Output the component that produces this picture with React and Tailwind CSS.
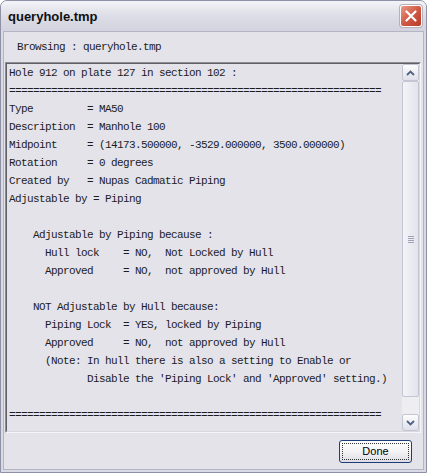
import React from "react";

const lines = [
  "Hole 912 on plate 127 in section 102 :",
  "==============================================================",
  "Type         = MA50",
  "Description  = Manhole 100",
  "Midpoint     = (14173.500000, -3529.000000, 3500.000000)",
  "Rotation     = 0 degrees",
  "Created by   = Nupas Cadmatic Piping",
  "Adjustable by = Piping",
  "",
  "    Adjustable by Piping because :",
  "      Hull lock    = NO,  Not Locked by Hull",
  "      Approved     = NO,  not approved by Hull",
  "",
  "    NOT Adjustable by Hull because:",
  "      Piping Lock  = YES, locked by Piping",
  "      Approved     = NO,  not approved by Hull",
  "      (Note: In hull there is also a setting to Enable or",
  "             Disable the 'Piping Lock' and 'Approved' setting.)",
  "",
  "==============================================================",
];

const mono = { fontFamily: '"Liberation Mono", "DejaVu Sans Mono", monospace' };

export default function App() {
  return (
    <div className="w-[427px] h-[473px] bg-white">
      <div className="w-[427px] h-[473px] flex flex-col rounded-t-[7px] border border-[#8e90a6] bg-[#d9dae4] overflow-hidden">
        {/* Title bar */}
        <div className="h-[30px] shrink-0 flex items-center justify-between pl-[7px] pr-[4px] bg-gradient-to-b from-[#f4f4f8] via-[#dcdde6] to-[#d2d3de]">
          <span
            className="text-[13px] font-bold text-[#101010] leading-none"
            style={{ fontFamily: '"Liberation Sans", Arial, sans-serif' }}
          >
            queryhole.tmp
          </span>
          <div className="w-[22px] h-[22px] rounded-[3px] border border-white bg-gradient-to-br from-[#e89a88] via-[#d05a45] to-[#b83a28] flex items-center justify-center shadow-[0_0_0_1px_#b8b0b8]">
            <svg width="12" height="12" viewBox="0 0 12 12">
              <path d="M1.5 1.5 L10.5 10.5 M10.5 1.5 L1.5 10.5" stroke="white" strokeWidth="2.2" strokeLinecap="round" />
            </svg>
          </div>
        </div>

        {/* Body */}
        <div className="flex-1 flex flex-col mx-[2px] mb-[2px] border border-[#b4b5c4] bg-[#e3e3e9]">
          <div className="h-[30px] shrink-0 flex items-center pl-[13px]">
            <span className="text-[11px] tracking-[-0.6px] text-[#1c1c1c] leading-none" style={mono}>
              Browsing : queryhole.tmp
            </span>
          </div>

          {/* Text box */}
          <div className="h-[371px] shrink-0 ml-[1px] mr-[2px] flex border border-t-[#8d8d96] border-l-[#8d8d96] border-r-[#f6f6f8] border-b-[#f6f6f8]">
            <div className="flex-1 flex border border-t-[#5f5f66] border-l-[#5f5f66] border-r-[#d8d8de] border-b-[#d8d8de]">
              <div className="flex-1 pl-[2px] pt-[0px] overflow-hidden">
                <pre
                  className="text-[11px] tracking-[-0.6px] leading-[18px] text-[#1c1c1c] whitespace-pre m-0"
                  style={mono}
                >
                  {lines.join("\n")}
                </pre>
              </div>
              {/* Scrollbar */}
              <div className="w-[17px] shrink-0 flex flex-col bg-[#eeeef2]">
                <div className="h-[17px] shrink-0 rounded-[2px] border border-[#c3c5d3] bg-gradient-to-b from-[#fdfdfe] to-[#dfe0ea] flex items-center justify-center">
                  <svg width="9" height="6" viewBox="0 0 9 6">
                    <path d="M1 5 L4.5 1.5 L8 5" stroke="#4d6185" strokeWidth="1.8" fill="none" />
                  </svg>
                </div>
                <div className="flex-1 mt-[0px] mb-[17px] rounded-[2px] border border-[#c3c5d3] bg-gradient-to-r from-[#f4f4f8] to-[#e2e3ec] flex items-center justify-center">
                  <div className="flex flex-col gap-[1px]">
                    <div className="w-[6px] h-[1px] bg-[#9ea3b8]" />
                    <div className="w-[6px] h-[1px] bg-[#9ea3b8]" />
                    <div className="w-[6px] h-[1px] bg-[#9ea3b8]" />
                    <div className="w-[6px] h-[1px] bg-[#9ea3b8]" />
                  </div>
                </div>
                <div className="h-[17px] shrink-0 rounded-[2px] border border-[#c3c5d3] bg-gradient-to-b from-[#fdfdfe] to-[#dfe0ea] flex items-center justify-center">
                  <svg width="9" height="6" viewBox="0 0 9 6">
                    <path d="M1 1 L4.5 4.5 L8 1" stroke="#4d6185" strokeWidth="1.8" fill="none" />
                  </svg>
                </div>
              </div>
            </div>
          </div>

          {/* Bottom */}
          <div className="flex-1 flex items-center justify-end pr-[11px] pt-[1px]">
            <button
              className="w-[73px] h-[23px] rounded-[3px] border border-[#1c3f7a] bg-gradient-to-b from-[#ffffff] via-[#f4f4f6] to-[#dcdce4] p-[2px]"
              style={{ fontFamily: '"Liberation Sans", Arial, sans-serif' }}
            >
              <div className="w-full h-full border border-dotted border-[#333] flex items-center justify-center text-[11px] text-black leading-none">
                Done
              </div>
            </button>
          </div>
        </div>
      </div>
    </div>
  );
}
